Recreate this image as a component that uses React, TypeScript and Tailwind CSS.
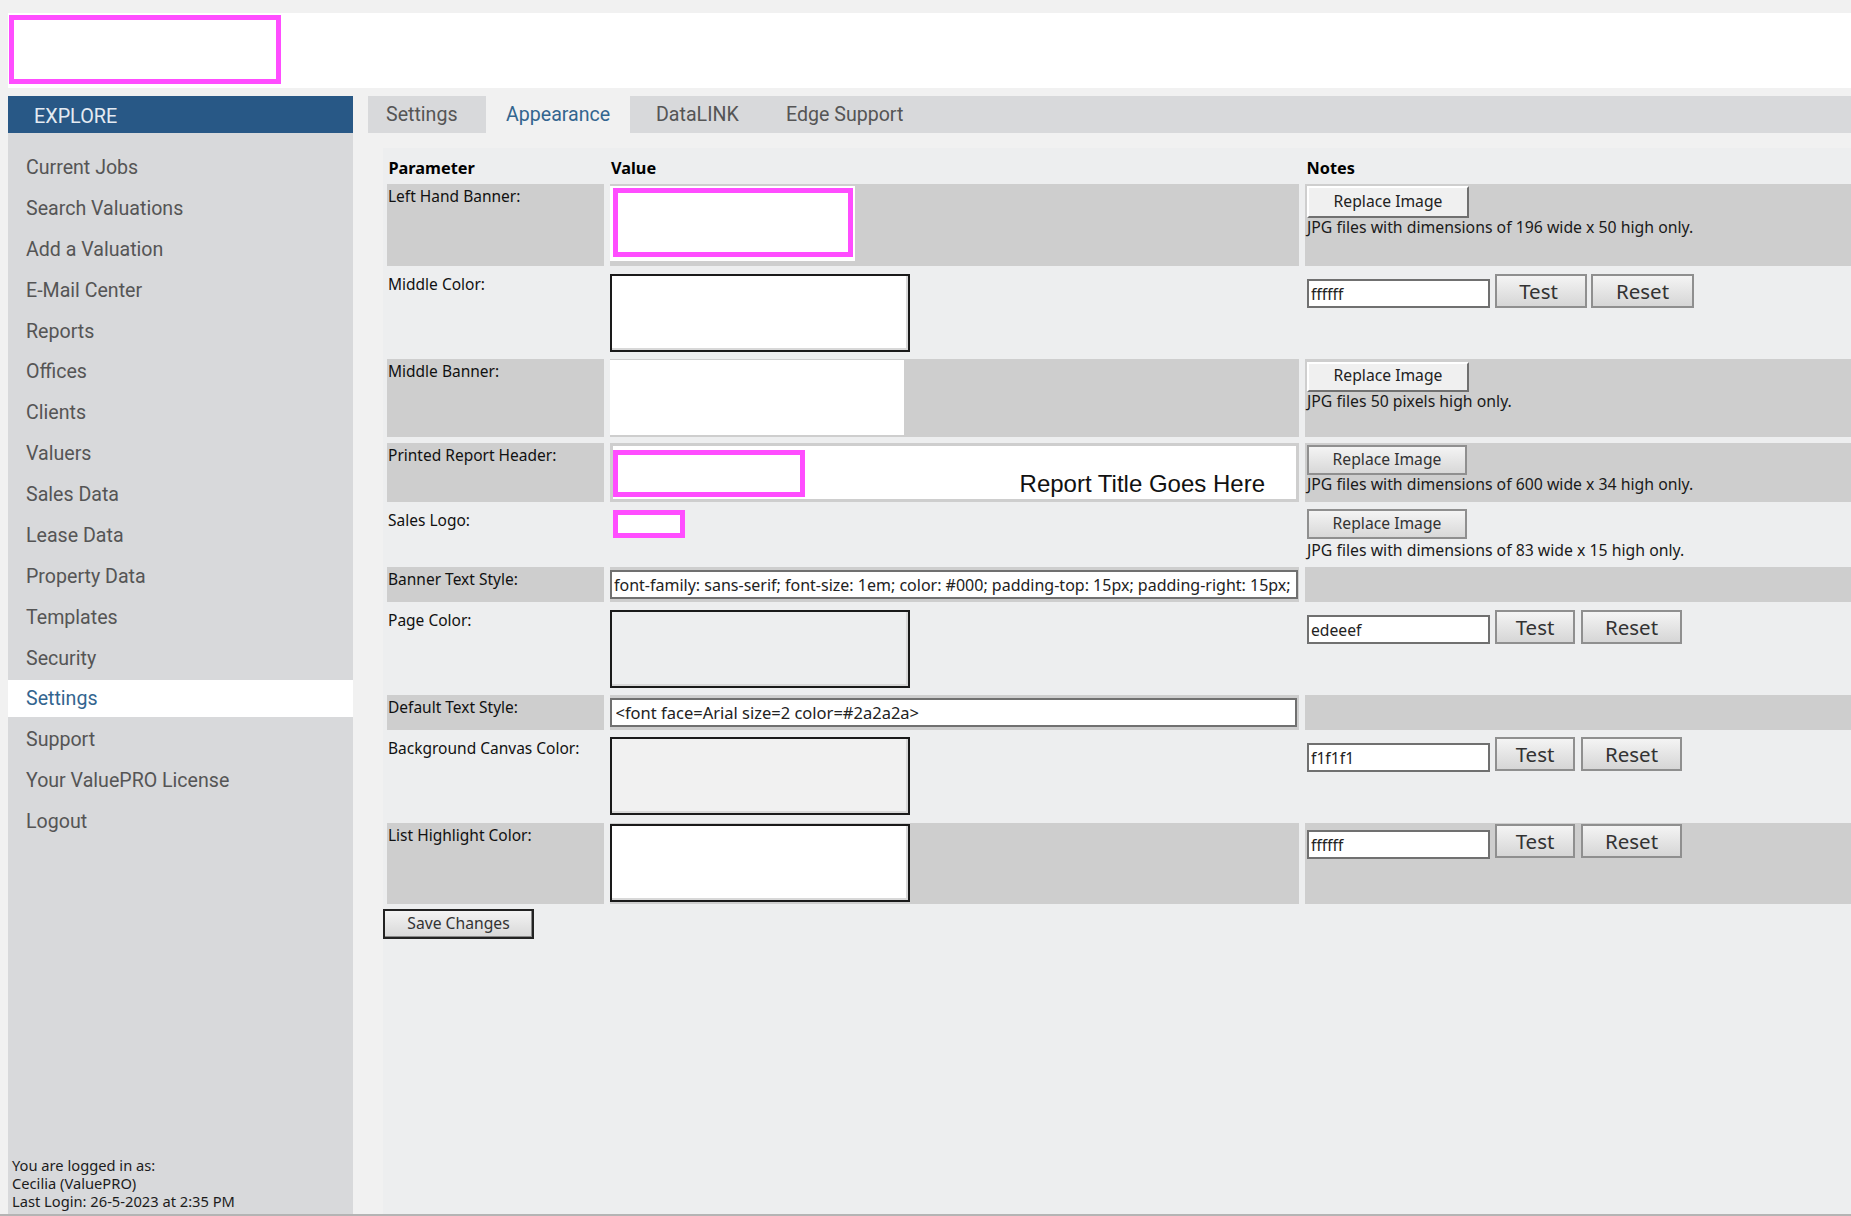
import React from "react";

const nav = ["Current Jobs","Search Valuations","Add a Valuation","E-Mail Center","Reports","Offices","Clients","Valuers","Sales Data","Lease Data","Property Data","Templates","Security","Settings","Support","Your ValuePRO License","Logout"];
const F = "font-['Noto_Sans',sans-serif]";
const R = "font-['Roboto',sans-serif]";

function Swatch({ bg }: { bg: string }) {
  return <div className={`w-[300px] h-[78px] border-2 border-[#1a1a1a] shadow-[inset_-2px_-2px_0_#d8d8d8] ${bg}`} />;
}
function Raised({ tall, mt }: { tall?: boolean; mt: string }) {
  return <button className={`block w-[162px] ${tall ? "h-[32px] pb-[1px]" : "h-[30px] pb-[2px]"} ml-[2px] ${mt} bg-[#f0f0f0] border-2 border-t-white border-l-white border-r-[#707070] border-b-[#707070] text-[15.7px] text-[#222] ${F}`}>Replace Image</button>;
}
function Flat() {
  return <button className={`block w-[160px] h-[30px] ml-[2px] pb-[1px] bg-gradient-to-b from-[#f4f4f4] to-[#d8d8d8] border-2 border-[#8f8f8f] text-[15.7px] text-[#333] ${F}`}>Replace Image</button>;
}
function Note({ children, mt = "mt-0" }: { children: React.ReactNode; mt?: string }) {
  return <p className={`pl-[2px] ${mt} text-[15.8px] leading-[18px] text-[#1a1a1a] ${F} whitespace-nowrap`}>{children}</p>;
}
function Color({ value, pt, wide, inputMt = "mt-[5px]" }: { value: string; pt: string; wide?: boolean; inputMt?: string }) {
  const btn = "h-[34px] pb-[3px] bg-gradient-to-b from-[#f4f4f4] to-[#d6d6d6] border-2 border-[#8f8f8f] text-[20.5px] text-[#333] " + F;
  return (
    <div className={`flex items-start pl-[2px] ${pt}`}>
      <input readOnly value={value} className={`w-[183px] h-[29px] ${inputMt} bg-white border-2 border-[#707070] px-[2px] text-[15.7px] text-[#222] outline-none ${F}`} />
      <button className={`${btn} ml-[5px] ${wide ? "w-[92px] pr-[5px]" : "w-[80px]"}`}>Test</button>
      <button className={`${btn} ${wide ? "ml-[4px] w-[103px]" : "ml-[6px] w-[101px]"}`}>Reset</button>
    </div>
  );
}
function Param({ children, gray }: { children: React.ReactNode; gray?: boolean }) {
  return <div className={`pl-[1px] pt-[2px] text-[15.5px] leading-[21px] text-[#111] whitespace-nowrap ${F} ${gray ? "bg-[#cecece]" : ""}`}>{children}</div>;
}
function TextField({ value, cls }: { value: string; cls: string }) {
  return <input readOnly value={value} className={`block h-[29px] bg-white border-2 border-[#707070] text-[#222] outline-none ${F} ${cls}`} />;
}
const head = `pl-[1.5px] pt-[10px] font-bold text-[16.3px] leading-[20px] text-black ${F}`;

export default function App() {
  return (
    <div className="w-[1851px] h-[1216px] overflow-hidden bg-[#f1f1f1] flex flex-col">
      <header className="mt-[13px] ml-[8px] h-[75px] bg-white pt-[2px] pl-[1px]">
        <div className="w-[272px] h-[69px] border-[5px] border-[#ff4dff] bg-white" />
      </header>
      <div className="mt-[8px] ml-[8px] h-[1118px] flex">
        <aside className="w-[345px] h-[1118px] bg-[#d8d9db] flex flex-col justify-between">
          <div>
            <div className={`h-[37px] bg-[#285886] pl-[26px] text-[19.8px] leading-[41px] text-[#e4ebf2] ${R}`}>EXPLORE</div>
            <nav className="pt-[16px]">
              {nav.map((n) => (
                n === "Settings"
                  ? <div key={n} className={`h-[37px] mb-[3.875px] pl-[18px] leading-[37px] text-[19.6px] ${R} bg-white text-[#33658f]`}>{n}</div>
                  : <div key={n} className={`h-[40.875px] pl-[18px] leading-[37px] text-[19.6px] ${R} text-[#555555]`}>{n}</div>
              ))}
            </nav>
          </div>
          <div className={`pl-[4px] pb-[4px] text-[14.7px] leading-[18px] text-[#1c1c1c] ${F}`}>
            <div>You are logged in as:</div>
            <div>Cecilia (ValuePRO)</div>
            <div>Last Login: 26-5-2023 at 2:35 PM</div>
          </div>
        </aside>
        <main className="ml-[15px] flex-1 min-w-0 flex flex-col">
          <div className={`h-[37px] bg-[#d8d9db] flex text-[19.6px] leading-[38px] text-[#555555] ${R}`}>
            <div className="w-[118px] pl-[18px]">Settings</div>
            <div className="w-[144px] pl-[20px] bg-[#f1f1f1] text-[#33658f]">Appearance</div>
            <div className="pl-[26px] w-[156px]">DataLINK</div>
            <div>Edge Support</div>
          </div>
          <section className="mt-[15px] ml-[15px] flex-1 bg-[#edeeef]">
            <div className="ml-[4px] grid grid-cols-[216.5px_689.5px_546px] gap-x-[6px] gap-y-[6px] grid-rows-[30px_82px_81px_78px_59px_53px_35px_81px_35px_81px_81px]">
              <div className={head}>Parameter</div>
              <div className={head}>Value</div>
              <div className={head}>Notes</div>

              <Param gray>Left Hand Banner:</Param>
              <div className="bg-[#cecece] pt-[2px]">
                <div className="w-[245px] h-[75px] bg-white pt-[2px] pl-[3px]">
                  <div className="w-[240px] h-[69px] border-[5px] border-[#ff4dff]" />
                </div>
              </div>
              <div className="bg-[#cecece] pt-[2px]"><Raised tall mt="mt-0" /><Note>JPG files with dimensions of 196 wide x 50 high only.</Note></div>

              <Param>Middle Color:</Param>
              <div className="pt-[2px]"><Swatch bg="bg-white" /></div>
              <Color value="ffffff" pt="pt-[2px]" wide />

              <Param gray>Middle Banner:</Param>
              <div className="bg-[#cecece] pt-[1px]"><div className="w-[294px] h-[75px] bg-white" /></div>
              <div className="bg-[#cecece]"><Raised mt="mt-[3px]" /><Note>JPG files 50 pixels high only.</Note></div>

              <Param gray>Printed Report Header:</Param>
              <div className="bg-[#cecece] pt-[3px] pl-[3px] pr-[3px]">
                <div className="h-[53px] bg-white flex items-end justify-between pr-[31px]">
                  <div className="w-[192px] h-[47px] mb-[2px] border-[5px] border-[#ff4dff]" />
                  <span className="font-['Liberation_Sans',sans-serif] text-[24px] leading-[30px] text-[#111]">Report Title Goes Here</span>
                </div>
              </div>
              <div className="bg-[#cecece] pt-[2px]"><Flat /><Note>JPG files with dimensions of 600 wide x 34 high only.</Note></div>

              <Param>Sales Logo:</Param>
              <div className="pt-[2px] pl-[3px]"><div className="w-[72px] h-[28px] border-[5px] border-[#ff4dff] bg-white" /></div>
              <div className="pt-[1px]"><Flat /><Note mt="mt-[2px]">JPG files with dimensions of 83 wide x 15 high only.</Note></div>

              <Param gray>Banner Text Style:</Param>
              <div className="bg-[#cecece] pt-[3px]"><TextField value="font-family: sans-serif; font-size: 1em; color: #000; padding-top: 15px; padding-right: 15px;" cls="w-[688px] pl-[2.5px] text-[16px]" /></div>
              <div className="bg-[#cecece]" />

              <Param>Page Color:</Param>
              <div className="pt-[2px]"><Swatch bg="bg-[#edeeef]" /></div>
              <Color value="edeeef" pt="pt-[2px]" />

              <Param gray>Default Text Style:</Param>
              <div className="bg-[#cecece] pt-[3px]"><TextField value="<font face=Arial size=2 color=#2a2a2a>" cls="w-[687px] pl-[4px] text-[16.5px]" /></div>
              <div className="bg-[#cecece]" />

              <Param>Background Canvas Color:</Param>
              <div className="pt-[1px]"><Swatch bg="bg-[#f1f1f1]" /></div>
              <Color value="f1f1f1" pt="pt-[1px]" inputMt="mt-[6px]" />

              <Param gray>List Highlight Color:</Param>
              <div className="bg-[#cecece] pt-[1px]"><Swatch bg="bg-white" /></div>
              <div className="bg-[#cecece] pt-[1px]"><Color value="ffffff" pt="pt-0" inputMt="mt-[6px]" /></div>
            </div>
            <button className={`block mt-[5px] w-[151px] h-[30px] bg-gradient-to-b from-[#f4f4f4] to-[#d8d8d8] border-2 border-[#222] shadow-[inset_-1px_-1px_0_#888] text-[15.7px] text-[#333] ${F}`}>Save Changes</button>
          </section>
        </main>
      </div>
      <div className="h-[2px] bg-[#b4b4b4]" />
    </div>
  );
}
